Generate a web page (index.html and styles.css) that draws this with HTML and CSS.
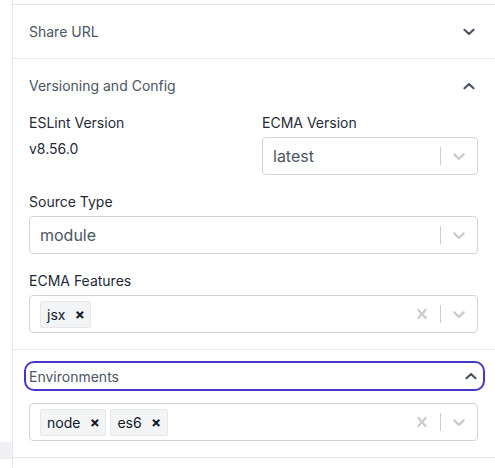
FILE: index.html
```html
<!DOCTYPE html>
<html>
<head>
<meta charset="utf-8">
<link rel="stylesheet" href="styles.css">
</head>
<body>
<div class="page">
  <div class="rail"><div class="rail-block"></div></div>
  <div class="panel">
    <section class="section">
      <div class="acc-head">
        <span>Share URL</span>
        <svg class="chev" width="12" height="8" viewBox="0 0 12 8"><polyline points="1.5,1.8 6,6 10.5,1.8" fill="none" stroke="#4b5563" stroke-width="2.2" stroke-linecap="round" stroke-linejoin="round"/></svg>
      </div>
    </section>
    <section class="section">
      <div class="acc-head">
        <span>Versioning and Config</span>
        <svg class="chev" width="12" height="8" viewBox="0 0 12 8"><polyline points="1.5,6.2 6,2 10.5,6.2" fill="none" stroke="#4b5563" stroke-width="2.2" stroke-linecap="round" stroke-linejoin="round"/></svg>
      </div>
      <div class="acc-body">
        <div class="grid2">
          <div class="field">
            <div class="label">ESLint Version</div>
            <div class="static">v8.56.0</div>
          </div>
          <div class="field">
            <div class="label">ECMA Version</div>
            <div class="select">
              <div class="value"><span class="single">latest</span></div>
              <div class="indicators">
                <span class="sep"></span>
                <span class="ind"><svg width="20" height="20" viewBox="0 0 20 20"><path fill="#cccccc" d="M4.516 7.548c0.436-0.446 1.043-0.481 1.576 0l3.908 3.747 3.908-3.747c0.533-0.481 1.141-0.446 1.574 0 0.436 0.445 0.408 1.197 0 1.615-0.406 0.418-4.695 4.502-4.695 4.502-0.217 0.223-0.502 0.335-0.787 0.335s-0.57-0.112-0.789-0.335c0 0-4.287-4.084-4.695-4.502s-0.436-1.17 0-1.615z"/></svg></span>
              </div>
            </div>
          </div>
        </div>
        <div class="field">
          <div class="label">Source Type</div>
          <div class="select">
            <div class="value"><span class="single">module</span></div>
            <div class="indicators">
              <span class="sep"></span>
              <span class="ind"><svg width="20" height="20" viewBox="0 0 20 20"><path fill="#cccccc" d="M4.516 7.548c0.436-0.446 1.043-0.481 1.576 0l3.908 3.747 3.908-3.747c0.533-0.481 1.141-0.446 1.574 0 0.436 0.445 0.408 1.197 0 1.615-0.406 0.418-4.695 4.502-4.695 4.502-0.217 0.223-0.502 0.335-0.787 0.335s-0.57-0.112-0.789-0.335c0 0-4.287-4.084-4.695-4.502s-0.436-1.17 0-1.615z"/></svg></span>
            </div>
          </div>
        </div>
        <div class="field last">
          <div class="label">ECMA Features</div>
          <div class="select">
            <div class="value multi">
              <span class="tag"><span class="tag-label">jsx</span><span class="tag-x">×</span></span>
            </div>
            <div class="indicators">
              <span class="ind"><svg width="20" height="20" viewBox="0 0 20 20"><path fill="#cccccc" d="M14.348 14.849c-0.469 0.469-1.229 0.469-1.697 0l-2.651-3.030-2.651 3.029c-0.469 0.469-1.229 0.469-1.697 0-0.469-0.469-0.469-1.229 0-1.697l2.758-3.15-2.759-3.152c-0.469-0.469-0.469-1.228 0-1.697s1.228-0.469 1.697 0l2.652 3.031 2.651-3.031c0.469-0.469 1.228-0.469 1.697 0s0.469 1.229 0 1.697l-2.758 3.152 2.758 3.15c0.469 0.469 0.469 1.229 0 1.698z"/></svg></span>
              <span class="sep"></span>
              <span class="ind"><svg width="20" height="20" viewBox="0 0 20 20"><path fill="#cccccc" d="M4.516 7.548c0.436-0.446 1.043-0.481 1.576 0l3.908 3.747 3.908-3.747c0.533-0.481 1.141-0.446 1.574 0 0.436 0.445 0.408 1.197 0 1.615-0.406 0.418-4.695 4.502-4.695 4.502-0.217 0.223-0.502 0.335-0.787 0.335s-0.57-0.112-0.789-0.335c0 0-4.287-4.084-4.695-4.502s-0.436-1.17 0-1.615z"/></svg></span>
            </div>
          </div>
        </div>
      </div>
    </section>
    <section class="section">
      <div class="acc-head focus-wrap">
        <div class="focus-btn">
          <span>Environments</span>
          <svg class="chev" width="12" height="8" viewBox="0 0 12 8"><polyline points="1.5,6.2 6,2 10.5,6.2" fill="none" stroke="#4b5563" stroke-width="2.2" stroke-linecap="round" stroke-linejoin="round"/></svg>
        </div>
      </div>
      <div class="acc-body env">
        <div class="select">
          <div class="value multi">
            <span class="tag"><span class="tag-label">node</span><span class="tag-x">×</span></span>
            <span class="tag"><span class="tag-label">es6</span><span class="tag-x">×</span></span>
          </div>
          <div class="indicators">
            <span class="ind"><svg width="20" height="20" viewBox="0 0 20 20"><path fill="#cccccc" d="M14.348 14.849c-0.469 0.469-1.229 0.469-1.697 0l-2.651-3.030-2.651 3.029c-0.469 0.469-1.229 0.469-1.697 0-0.469-0.469-0.469-1.229 0-1.697l2.758-3.15-2.759-3.152c-0.469-0.469-0.469-1.228 0-1.697s1.228-0.469 1.697 0l2.652 3.031 2.651-3.031c0.469-0.469 1.228-0.469 1.697 0s0.469 1.229 0 1.697l-2.758 3.152 2.758 3.15c0.469 0.469 0.469 1.229 0 1.698z"/></svg></span>
            <span class="sep"></span>
            <span class="ind"><svg width="20" height="20" viewBox="0 0 20 20"><path fill="#cccccc" d="M4.516 7.548c0.436-0.446 1.043-0.481 1.576 0l3.908 3.747 3.908-3.747c0.533-0.481 1.141-0.446 1.574 0 0.436 0.445 0.408 1.197 0 1.615-0.406 0.418-4.695 4.502-4.695 4.502-0.217 0.223-0.502 0.335-0.787 0.335s-0.57-0.112-0.789-0.335c0 0-4.287-4.084-4.695-4.502s-0.436-1.17 0-1.615z"/></svg></span>
          </div>
        </div>
      </div>
    </section>
  </div>
</div>
</body>
</html>
```
FILE: styles.css
```css
html, body {
  margin: 0;
  padding: 0;
  background: #ffffff;
  font-family: Inter, "Noto Sans", sans-serif;
  color: #374151;
}
.page {
  display: flex;
  height: 468px;
  overflow: hidden;
}
.rail {
  width: 12px;
  flex: none;
  display: flex;
  flex-direction: column;
  justify-content: flex-start;
}
.rail-block {
  margin-top: 442px;
  height: 17px;
  background: #eef0f3;
}
.panel {
  flex: 1;
  border-left: 1px solid #e5e7eb;
  padding-top: 4px;
}
.section {
  border-top: 1px solid #e5e7eb;
}
.section:last-child {
  border-bottom: 1px solid #e5e7eb;
}
.acc-head {
  height: 53px;
  padding: 0 20px 0 16px;
  display: flex;
  align-items: center;
  justify-content: space-between;
  font-size: 14px;
  color: #4b5563;
}
.acc-body {
  padding: 1px 17px 16px 16px;
}
.grid2 {
  display: grid;
  grid-template-columns: 1fr 1fr;
  column-gap: 17px;
}
.field {
  margin-bottom: 17px;
}
.field.last {
  margin-bottom: 0;
}
.label {
  font-size: 14px;
  line-height: 20px;
  color: #1f2937;
  margin-bottom: 4px;
}
.static {
  font-size: 14px;
  line-height: 20px;
  color: #1f2937;
  margin-top: 6px;
}
.select {
  box-sizing: border-box;
  height: 38px;
  border: 1px solid #d1d5db;
  border-radius: 4px;
  display: flex;
  align-items: center;
  background: #fff;
}
.value {
  flex: 1;
  padding: 2px 8px 2px 10px;
  display: flex;
  align-items: center;
  min-width: 0;
}
.single {
  font-size: 16px;
  color: #4b5563;
}
.value.multi {
  padding: 2px 8px;
}
.tag {
  display: inline-flex;
  align-items: center;
  box-sizing: border-box;
  height: 27px;
  margin: 2px;
  background: #f3f4f6;
  border: 1px solid #e5e7eb;
  border-radius: 2px;
  font-size: 14px;
  color: #111827;
}
.tag-label {
  padding: 0 4px 0 6px;
}
.tag-x {
  width: 21px;
  text-align: center;
  font-size: 15px;
  font-weight: 700;
  color: #111827;
}
.indicators {
  display: flex;
  align-items: center;
  align-self: stretch;
}
.ind {
  padding: 0 8px;
  display: flex;
  align-items: center;
}
.sep {
  width: 1px;
  align-self: stretch;
  margin: 9px 0;
  background: #cccccc;
}
.focus-wrap {
  padding: 0 10px 0 11px;
  height: 41px;
  align-items: flex-end;
}
.focus-btn {
  box-sizing: border-box;
  flex: 1;
  height: 30px;
  border: 2px solid #4338ca;
  border-radius: 10px;
  display: flex;
  align-items: center;
  justify-content: space-between;
  padding: 0 6px 0 3px;
}
.acc-body.env {
  padding-top: 12px;
  padding-bottom: 16px;
}
```
